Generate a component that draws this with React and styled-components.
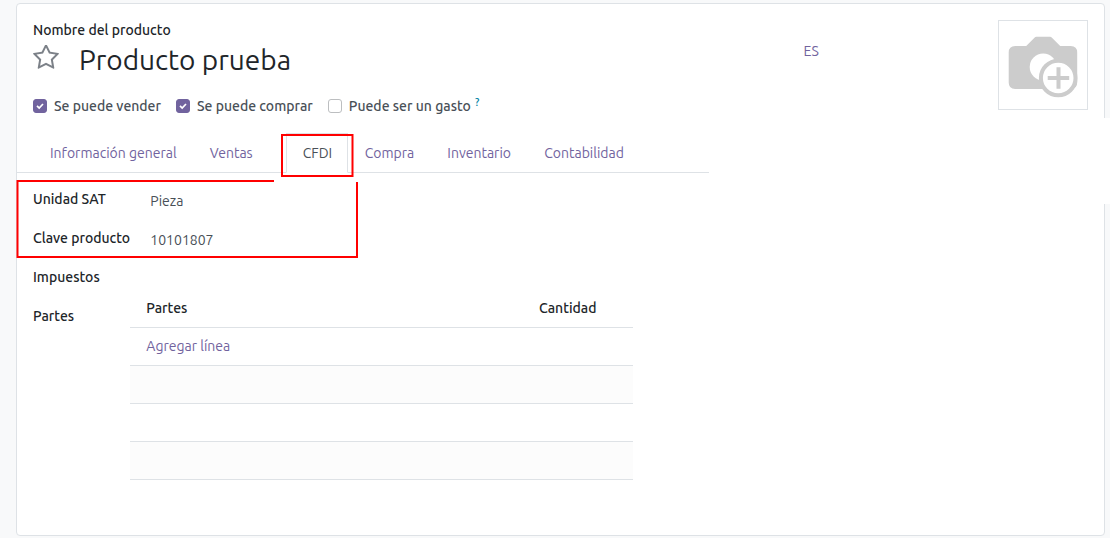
import React from "react";
import styled, { createGlobalStyle, css } from "styled-components";

const colors = {
  primary: "#71639e",
  heading: "#212529",
  text: "#495057",
  border: "#dee2e6",
  mark: "#ff0000",
};

const GlobalStyle = createGlobalStyle`
  *, *::before, *::after { box-sizing: border-box; }
  body {
    margin: 0;
    background: #f8f9fa;
    color: ${colors.text};
    font: 400 14px/21px Ubuntu, "Noto Sans", sans-serif;
    overflow: hidden;
  }
`;

const Page = styled.main`
  position: relative;
  height: 538px;
  padding: 3px 5px 2px 16px;
`;

const Sheet = styled.section`
  height: 533px;
  padding: 16px 16px 0 0;
  display: flex;
  align-items: flex-start;
  background: #fff;
  border: 1px solid ${colors.border};
  border-radius: 4px;
`;

const Main = styled.div`
  width: 692px;
`;

const Header = styled.header`
  padding-left: 16px;
`;

const Label = styled.label`
  display: block;
  color: ${colors.heading};
  font-weight: 500;
`;

const TitleRow = styled.div`
  display: flex;
  align-items: center;
  height: 38px;
  gap: 20px;
`;

const StarIcon = styled.svg`
  width: 26px;
  height: 25px;
  margin-top: -5px;
  flex: none;
  fill: #7c8188;
`;

const Title = styled.h1`
  margin: 0;
  color: ${colors.heading};
  font-size: 28px;
  font-weight: 400;
  line-height: 38px;
`;

const Options = styled.div`
  display: flex;
  height: 21px;
  margin-top: 16px;
`;

const Option = styled.label`
  display: flex;
  align-items: center;
  gap: 7px;
  margin-right: 15px;
  font-weight: 500;
  white-space: nowrap;
`;

const OptionText = styled.span`
  padding-top: 2px;
`;

const CheckBox = styled.span`
  display: grid;
  place-items: center;
  width: 14px;
  height: 14px;
  border: 1px solid ${(p) => (p.$checked ? colors.primary : "#bcbec0")};
  border-radius: 3px;
  background: ${(p) => (p.$checked ? colors.primary : "#fff")};
`;

const Help = styled.sup`
  margin: -8px 0 0 -3px;
  color: #0180a5;
  font-size: 10.5px;
  font-weight: 500;
  line-height: 12px;
`;

const TabBar = styled.nav`
  display: flex;
  height: 40px;
  margin-top: 17px;
  padding-left: 16px;
  border-bottom: 1px solid ${colors.border};
`;

const Tab = styled.a`
  height: 40px;
  margin-right: -0.8px;
  padding: 9px 16px 0;
  border: 1px solid transparent;
  color: ${colors.primary};
  ${(p) =>
    p.$active &&
    css`
      margin-left: 16.8px;
      padding-right: 15.3px;
      color: ${colors.text};
      background: #fff;
      border-color: ${colors.border} ${colors.border} #fff;
    `}
`;

const Fields = styled.div`
  display: grid;
  grid-template-columns: 97px 503px;
  padding: 16px 0 0 16px;
`;

const FieldLabel = styled(Label)`
  height: 39px;
  white-space: nowrap;
`;

const Value = styled.div`
  height: 39px;
  padding: 2px 0 0 20.3px;
`;

const Lines = styled.div`
  margin-top: -17px;
`;

const Line = styled.div`
  display: grid;
  grid-template-columns: 392.600px 1fr;
  align-items: center;
  height: 38px;
  padding: 0 16.3px;
  border-bottom: 1px solid ${colors.border};
  background: ${(p) => (p.$striped ? "#fcfcfc" : "#fff")};
`;

const HeadLine = styled(Line)`
  height: 39px;
  color: ${colors.heading};
  font-weight: 500;
`;

const AddLink = styled.a`
  color: ${colors.primary};
`;

const Language = styled.span`
  margin: 21px auto 0 94.6px;
  color: ${colors.primary};
`;

const Photo = styled.div`
  width: 90px;
  height: 90px;
  border: 1px solid ${colors.border};
  background: #fff;
`;

const Blank = styled.div`
  position: absolute;
  top: 118px;
  right: 0;
  width: 60px;
  height: 86px;
  background: #fff;
`;

const Marks = styled.svg`
  position: absolute;
  inset: 0;
  fill: none;
  stroke: ${colors.mark};
  stroke-width: 2;
  pointer-events: none;
`;

const STAR =
  "M1201 1004l306-297-422-62-189-382-189 382-422 62 306 297-73 421 378-199 377 199zm527-357q0 22-26 48l-363 354 86 500q1 7 1 20 0 50-41 50-19 0-40-12l-449-236-449 236q-22 12-40 12-21 0-31.500-14.500t-10.500-35.500q0-6 2-20l86-500-364-354q-25-27-25-48 0-37 56-46l502-73 225-455q19-41 49-41t49 41l225 455 502 73q56 9 56 46z";

function Check({ checked, help, children }) {
  return (
    <Option>
      <CheckBox $checked={checked}>
        {checked && (
          <svg width="8" height="8" viewBox="0 0 8 8">
            <path d="M1 3.900l2.200 2.200L7 2" fill="none" stroke="#fff" strokeWidth="1.700" />
          </svg>
        )}
      </CheckBox>
      <OptionText>{children}</OptionText>
      {help && <Help>?</Help>}
    </Option>
  );
}

function CameraPlus() {
  return (
    <svg width="88" height="88" viewBox="998.8 21 88 88" display="block">
      <path
        fill="#cccccc"
        d="M1015 46h11l8.500-8.500q.7-.7 1.500-.7h14q.8 0 1.500.7l8.500 8.500h10.500q6.500 0 6.500 6.500v30q0 6.500-6.500 6.500H1015q-6.500 0-6.500-6.500v-30q0-6.500 6.500-6.500z"
      />
      <circle cx="1043" cy="67" r="13.500" fill="#fff" />
      <circle cx="1058" cy="78" r="17.300" fill="#fff" stroke="#cccccc" strokeWidth="4" />
      <path d="M1047.500 78h21.500M1058.300 67.200v21.600" stroke="#cccccc" strokeWidth="4" />
    </svg>
  );
}

export default function App() {
  return (
    <Page>
      <GlobalStyle />
      <Sheet>
        <Main>
          <Header>
            <Label>Nombre del producto</Label>
            <TitleRow>
              <StarIcon viewBox="64 128 1664 1536">
                <path d={STAR} />
              </StarIcon>
              <Title>Producto prueba</Title>
            </TitleRow>
            <Options>
              <Check checked>Se puede vender</Check>
              <Check checked>Se puede comprar</Check>
              <Check help>Puede ser un gasto</Check>
            </Options>
          </Header>
          <TabBar>
            <Tab>Información general</Tab>
            <Tab>Ventas</Tab>
            <Tab $active>CFDI</Tab>
            <Tab>Compra</Tab>
            <Tab>Inventario</Tab>
            <Tab>Contabilidad</Tab>
          </TabBar>
          <Fields>
            <FieldLabel>Unidad SAT</FieldLabel>
            <Value>Pieza</Value>
            <FieldLabel>Clave producto</FieldLabel>
            <Value>10101807</Value>
            <FieldLabel>Impuestos</FieldLabel>
            <Value />
            <FieldLabel>Partes</FieldLabel>
            <Lines>
              <HeadLine>
                <span>Partes</span>
                <span>Cantidad</span>
              </HeadLine>
              <Line>
                <AddLink>Agregar línea</AddLink>
              </Line>
              <Line $striped />
              <Line />
              <Line $striped />
            </Lines>
          </Fields>
        </Main>
        <Language>ES</Language>
        <Photo>
          <CameraPlus />
        </Photo>
      </Sheet>
      <Blank />
      <Marks width="1110" height="538">
        <rect x="282" y="135" width="70.500" height="41" />
        <path d="M274 181H17.500V257H357V182" />
      </Marks>
    </Page>
  );
}
